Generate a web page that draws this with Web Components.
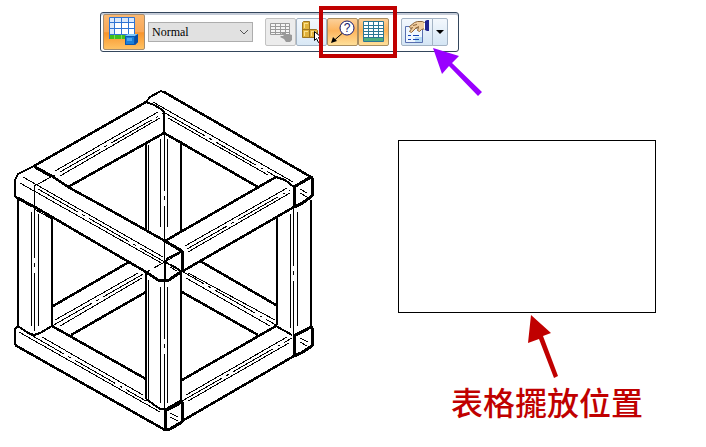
<!DOCTYPE html>
<html lang="zh-Hant">
<head>
<meta charset="utf-8">
<meta name="viewport" content="width=device-width, initial-scale=1">
<title>表格擺放位置</title>
<style>
    body {
        margin: 0;
        background: #fff;
        font-family: "Liberation Serif", "Noto Sans CJK TC", serif;
    }
</style>
</head>
<body>
<sheet-page>
    <tool-bar slot="toolbar">
        <tool-button icon="insert" label="Insert table" state="big"></tool-button>
        <style-select label="Table style" value="Normal"></style-select>
        <button-group>
            <tool-button icon="tablePick" label="Select table" state="off"></tool-button>
            <tool-button icon="parts" label="Select parts"></tool-button>
            <mark-box>
                <tool-button icon="balloon" label="Auto balloon" state="on"></tool-button>
                <tool-button icon="grid" label="Place list" state="on"></tool-button>
            </mark-box>
        </button-group>
        <split-button label="Properties"></split-button>
    </tool-bar>
    <frame-drawing slot="drawing"></frame-drawing>
    <table-area slot="area">表格擺放位置</table-area>
</sheet-page>

<script>
const ICONS = {
    insert: `
        <svg width="30" height="30" viewBox="0 0 30 30">
            <path fill="#fff" d="M1 1h25v20H1z"/>
            <path fill="#dbe9fb" d="M1 1h25v4H1zM1 5h4v12H1z"/>
            <path fill="none" stroke="#2f74d4" d="M.5 22V.5h25V22M5.500 1v20M12.500 1v20M19.500 1v20M1 5.500h25M1 11.500h25M1 17.500h25"/>
            <path fill="#3fbf1c" d="M1 18h25v4H1z"/>
            <path stroke="#7fdc5c" d="M5.500 18v4M12.500 18v4"/>
            <path fill="#1b7fd8" d="M16 19l3-2h10v8l-3 3H16z"/>
            <path fill="#7cc6f8" d="M16 19l3-2h10l-3 2z"/>
            <path fill="#0a4ea4" d="M26 19l3-2v8l-3 3z"/>
            <path fill="none" stroke="#0b55ae" d="M16.500 19.500h9v8h-9z"/>
            <path fill="#4ba7f0" d="M18 21h5v3h-5z"/>
        </svg>`,
    tablePick: `
        <svg width="24" height="22" viewBox="0 0 24 22">
            <path fill="#f4f4f4" stroke="#999" d="M1.500 2.500h19v11h-19z"/>
            <path fill="none" stroke="#999" d="M1 5.500h20M1 8.500h20M1 11.500h20M6.500 2v12M11.500 2v12M16.500 2v12"/>
            <path fill="#999" d="M12 12l4-1v2h4l3 1v5l-2 2h-4l-2-3-4-2 1-1h3z"/>
        </svg>`,
    parts: `
        <svg width="24" height="22" viewBox="0 0 24 22">
            <path fill="#e0b23c" stroke="#9c7422" d="M2.500 1.500l1-1h6v8h7l1 1v7h-15z"/>
            <path fill="none" stroke="#9c7422" d="M3 8.500h7M9.500 9v8"/>
            <path fill="#fbe08a" d="M4 2h4v1H5v4H4zM4 10h4v1H5v4H4zM11 10h5v1h-4v4h-1z"/>
            <path fill="#fff" stroke="#000" d="M14.500 10.500v9l2-2 2 4 2-1-2-4h3z"/>
        </svg>`,
    balloon: `
        <svg width="28" height="24" viewBox="0 0 28 24">
            <path stroke="#000" stroke-width="1" d="M13 13.500L5 20.500"/>
            <path d="M2 23l2-6 4 4z"/>
            <circle cx="18" cy="8" r="7" fill="#fff" stroke="#18186c"/>
            <text x="18" y="12" text-anchor="middle" font-family="Liberation Sans, sans-serif" font-size="12" fill="#18186c">?</text>
        </svg>`,
    grid: `
        <svg width="22" height="22" viewBox="0 0 22 22">
            <path fill="#fff" d="M1 1h20v19H1z"/>
            <path fill="none" stroke="#2b7594" d="M.5.5h20v20H.5zM5.500 1v19M10.500 1v19M15.500 1v19M1 4.500h19M1 7.500h19M1 10.500h19M1 13.500h19M1 16.500h19"/>
            <path fill="#4fae80" d="M1 17h19v3H1z"/>
        </svg>`,
    properties: `
        <svg width="28" height="24" viewBox="0 0 28 24">
            <path fill="#eff7ff" stroke="#5970b0" d="M2.500 6.500h17v16h-17z"/>
            <path fill="#b8dcf5" d="M12 17h7v5h-7z"/>
            <path stroke="#1646b4" d="M5 15.500h3M10 15.500h6M5 19.500h3M10 19.500h6"/>
            <path fill="#f0cda0" stroke="#8a6238" d="M6.500 6.500l5-4 3-1h5l3 2v5l-4 1-2 2-2-1 1-3-3 1-4 4-2-1 3-4-2 1z"/>
            <path fill="none" stroke="#8a6238" d="M10 5.500l4-1M12 8.500l4-2"/>
            <path fill="#20248f" d="M22 1l2-1h2v11h-2l-2-1z"/>
            <path fill="#fff" d="M21 3h1v6h-1z"/>
        </svg>`
};

class SheetPage extends HTMLElement {
    constructor() {
        super();
        this.attachShadow({ mode: 'open' });
    }

    connectedCallback() {
        this.shadowRoot.innerHTML = `
            <style>
                :host {
                    display: block;
                }
                header {
                    display: flex;
                    padding: 12px 16px 38px 100px;
                }
                main {
                    display: grid;
                    grid-template-columns: 306fr 258fr;
                    column-gap: 80px;
                    align-items: start;
                    padding: 0 50px 0 12px;
                }
            </style>
            <header><slot name="toolbar"></slot></header>
            <main>
                <slot name="drawing"></slot>
                <slot name="area"></slot>
            </main>
        `;
    }
}

class ToolBar extends HTMLElement {
    constructor() {
        super();
        this.attachShadow({ mode: 'open' });
    }

    connectedCallback() {
        this.shadowRoot.innerHTML = `
            <style>
                :host {
                    box-sizing: border-box;
                    display: flex;
                    align-items: center;
                    padding: 0 10px 0 2px;
                    min-height: 40px;
                    border: 1px solid #34465c;
                    border-radius: 3px;
                    background: #fff;
                    box-shadow: inset 0 2px #c5ccd8;
                }
                ::slotted(style-select) {
                    margin: 0 12px 0 3px;
                }
                ::slotted(split-button) {
                    margin-left: 12px;
                }
            </style>
            <slot></slot>
        `;
    }
}

class ToolButton extends HTMLElement {
    constructor() {
        super();
        this.attachShadow({ mode: 'open' });
    }

    connectedCallback() {
        const state = this.getAttribute('state') || 'normal';
        const label = this.getAttribute('label');

        this.shadowRoot.innerHTML = `
            <style>
                :host {
                    display: block;
                }
                button {
                    box-sizing: border-box;
                    display: grid;
                    place-items: center;
                    width: 31px;
                    height: 28px;
                    padding: 0;
                    border: 1px solid #a3b3c4;
                    border-radius: 2px;
                    background: linear-gradient(#f3f8fd, #d9e8f5);
                }
                .off {
                    border-color: #c2c2c2;
                    background: #ececec;
                }
                .on {
                    border-color: #a98d5f;
                    background: linear-gradient(#fbd09a, #fdb45c 45%, #ffdf98);
                }
                .big {
                    width: 42px;
                    height: 36px;
                    border: 1px solid #a58d70;
                    background: linear-gradient(#fbb870, #f9a858 50%, #f8942c 52%, #ffc263);
                }
                svg {
                    display: block;
                }
            </style>
            <button type="button" class="${state}" aria-label="${label}">${ICONS[this.getAttribute('icon')]}</button>
        `;
    }
}

class ButtonGroup extends HTMLElement {
    constructor() {
        super();
        this.attachShadow({ mode: 'open' });
    }

    connectedCallback() {
        this.shadowRoot.innerHTML = `
            <style>
                :host {
                    display: flex;
                }
            </style>
            <slot></slot>
        `;
    }
}

// red outline that lies over the buttons it points out
class MarkBox extends HTMLElement {
    constructor() {
        super();
        this.attachShadow({ mode: 'open' });
    }

    connectedCallback() {
        this.shadowRoot.innerHTML = `
            <style>
                :host {
                    display: flex;
                    position: relative;
                }
                .mark {
                    position: absolute;
                    inset: -12px -8px;
                    border: 4px solid #c00000;
                    pointer-events: none;
                }
            </style>
            <slot></slot>
            <div class="mark"></div>
        `;
    }
}

class StyleSelect extends HTMLElement {
    constructor() {
        super();
        this.attachShadow({ mode: 'open' });
    }

    connectedCallback() {
        this.shadowRoot.innerHTML = `
            <style>
                :host {
                    display: grid;
                    align-items: center;
                }
                select, svg {
                    grid-area: 1 / 1;
                }
                select {
                    appearance: none;
                    box-sizing: border-box;
                    width: 105px;
                    height: 20px;
                    margin: 0;
                    padding: 0 20px 0 3px;
                    border: 1px solid #adadad;
                    border-radius: 0;
                    background: #e1e1e1;
                    color: #000;
                    font: 12px "Liberation Serif", serif;
                }
                svg {
                    justify-self: end;
                    margin-right: 4px;
                    pointer-events: none;
                }
            </style>
            <select aria-label="${this.getAttribute('label')}">
                <option>${this.getAttribute('value')}</option>
            </select>
            <svg width="10" height="6" viewBox="0 0 10 6">
                <path fill="none" stroke="#555" d="M1 1l4 4 4-4"/>
            </svg>
        `;
    }
}

class SplitButton extends HTMLElement {
    constructor() {
        super();
        this.attachShadow({ mode: 'open' });
    }

    connectedCallback() {
        const label = this.getAttribute('label');

        this.shadowRoot.innerHTML = `
            <style>
                :host {
                    display: flex;
                    position: relative;
                }
                button {
                    box-sizing: border-box;
                    display: grid;
                    place-items: center;
                    width: 32px;
                    height: 28px;
                    padding: 0;
                    border: 1px solid #a3b3c4;
                    border-radius: 2px 0 0 2px;
                    background: linear-gradient(#f3f8fd, #d4e5f4);
                }
                .more {
                    width: 16px;
                    margin-left: -1px;
                    border-radius: 0 2px 2px 0;
                }
                .arrow {
                    position: absolute;
                    left: 32px;
                    top: 30px;
                    pointer-events: none;
                }
            </style>
            <button type="button" aria-label="${label}">${ICONS.properties}</button>
            <button type="button" class="more" aria-label="${label} menu">
                <svg width="8" height="4" viewBox="0 0 8 4"><path d="M0 0h8L4 4z"/></svg>
            </button>
            <svg class="arrow" width="50" height="50" viewBox="0 0 50 50">
                <path fill="#9900ff" d="M0 0l26 8-7 7 30 29-4 4-29-30-7 8z"/>
            </svg>
        `;
    }
}

class FrameDrawing extends HTMLElement {
    constructor() {
        super();
        this.attachShadow({ mode: 'open' });
    }

    connectedCallback() {
        this.shadowRoot.innerHTML = `
            <style>
                :host {
                    display: block;
                }
                svg {
                    display: block;
                    width: 100%;
                    height: auto;
                    fill: none;
                    stroke: #000;
                    stroke-linejoin: round;
                    shape-rendering: crispEdges;
                }
                .edge {
                    stroke-width: 2;
                }
                .bold {
                    stroke-width: 2.5;
                }
                .cap {
                    stroke-width: 3;
                }
                .center {
                    stroke-dasharray: 46 5 3 5;
                }
                .post {
                    stroke-dasharray: 58 5 4 6;
                }
            </style>
            <svg viewBox="12 90 306 344" role="img" aria-label="Cube frame">
                <g class="edge">
                    <!-- top back beams -->
                    <path d="M146 102l4-5 11-6 5 2M146 102l8 3 7 4 3 3v21"/>
                    <path class="bold" d="M34 166L146 102M68 187L164 133l94 54M164 92L311 177"/>
                    <!-- top front beams -->
                    <path class="bold" d="M34 166l18 10 16 11 42 23 55 31M17 198l18 9 111 65"/>
                    <path class="bold" d="M165 241l111-64M183 271l111-64"/>
                    <path d="M276 177l9 3 9 7M34 166l-16 8-3 6v16l3 3"/>
                    <path d="M165 281v-19l3-4 14-7"/>
                    <!-- posts -->
                    <path d="M146 143v88M181 141v91M146 272v127M181 272v129"/>
                    <path class="bold" d="M18 199v127M52 218v108M277 217v108M311 200v127"/>
                    <!-- bottom back beams -->
                    <path class="bold" d="M53 306l76-44M71 335l75-43M200 261l76 44M182 292l76 43"/>
                    <!-- bottom front beams -->
                    <path d="M18 326l10 7 6 2 6-2 12-7M18 326l-3 3v16M276 326l16 9"/>
                    <path class="bold" d="M15 345l150 85M52 326l94 53M182 380l94-54M182 421l112-65"/>
                    <path d="M146 399l14 10h6l16-9"/>
                </g>
                <g class="cap">
                    <path d="M294 187l17-10 1 1v18l-11 8-7 3z"/>
                    <path d="M165 241l17 10v20l-13 9h-11l-12-8"/>
                    <path d="M165 411l17-9v20l-12 7-5 1z"/>
                    <path d="M294 336l17-9 1 1v18l-11 7-7 3z"/>
                    <path d="M35 167l16 9M18 198l14 8"/>
                </g>
                <!-- tangent lines of the rounded corners -->
                <path d="M55 171L158 112M60 176L160 118M153 102l140 80M168 118l100 57M23 177l140 80M20 183l143 81M185 246l102-58M188 252l102-59"/>
                <path d="M55 320l83-47M60 326l82-48M188 273l87 47M186 278l84 48M42 337l101 58M19 332l141 80M186 395l101-58M188 401l101-58"/>
                <path d="M34.500 210v-24l20-11M34 209l18 10"/>
                <path d="M31.500 212v114M38.500 214v112M148.500 145v86M160.500 139v88M167.500 139v88M148.500 280v120M160.500 287v116M167.500 287v116M290.500 214v114M297.500 212v114"/>
                <path d="M300 189l7 4M300 193l7 4M300 338l8 4M300 342l7 4M170 413l8 4M170 417l8 4M170 264l9 5M170 267l7 4"/>
                <g class="center">
                    <path d="M60 172l104-59M165 113l110 63M38 189l144 83M187 249l103-59M52 326l130-74M164 261l112 64M24 331l122 70M182 401l110-63"/>
                </g>
                <g class="post">
                    <path d="M34.500 200v135M164.500 133v132M164.500 281v130M293.500 208v127"/>
                </g>
            </svg>
        `;
    }
}

class TableArea extends HTMLElement {
    constructor() {
        super();
        this.attachShadow({ mode: 'open' });
    }

    connectedCallback() {
        this.shadowRoot.innerHTML = `
            <style>
                :host {
                    display: block;
                    padding-top: 50px;
                }
                .frame {
                    box-sizing: border-box;
                    aspect-ratio: 258 / 173;
                    border: 1px solid #000;
                }
                .note {
                    display: flex;
                    flex-direction: column;
                    align-items: center;
                    padding-left: 40px;
                    color: #c00000;
                }
                svg {
                    display: block;
                }
                p {
                    margin: 0;
                    font: 500 32px/44px "Noto Sans CJK TC", sans-serif;
                    white-space: nowrap;
                }
            </style>
            <div class="frame"></div>
            <div class="note">
                <svg width="40" height="66" viewBox="0 0 40 66">
                    <path fill="#c00000" d="M4 2l20 18-8 3 15 40-4 2-15-39-11 4z"/>
                </svg>
                <p><slot></slot></p>
            </div>
        `;
    }
}

customElements.define('sheet-page', SheetPage);
customElements.define('tool-bar', ToolBar);
customElements.define('tool-button', ToolButton);
customElements.define('button-group', ButtonGroup);
customElements.define('mark-box', MarkBox);
customElements.define('style-select', StyleSelect);
customElements.define('split-button', SplitButton);
customElements.define('frame-drawing', FrameDrawing);
customElements.define('table-area', TableArea);
</script>
</body>
</html>
